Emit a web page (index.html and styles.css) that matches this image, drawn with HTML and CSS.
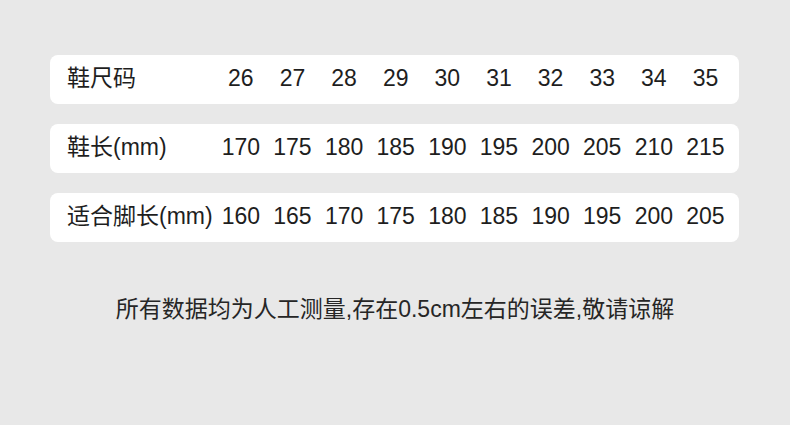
FILE: index.html
```html
<!DOCTYPE html>
<html lang="zh">
<head>
<meta charset="utf-8">
<title>尺码表</title>
<link rel="stylesheet" href="styles.css">
</head>
<body>
<div class="page">
  <div class="table">
    <div class="row">
      <div class="label">鞋尺码</div>
      <div class="cell">26</div><div class="cell">27</div><div class="cell">28</div><div class="cell">29</div><div class="cell">30</div>
      <div class="cell">31</div><div class="cell">32</div><div class="cell">33</div><div class="cell">34</div><div class="cell">35</div>
    </div>
    <div class="row">
      <div class="label">鞋长(mm)</div>
      <div class="cell">170</div><div class="cell">175</div><div class="cell">180</div><div class="cell">185</div><div class="cell">190</div>
      <div class="cell">195</div><div class="cell">200</div><div class="cell">205</div><div class="cell">210</div><div class="cell">215</div>
    </div>
    <div class="row">
      <div class="label">适合脚长(mm)</div>
      <div class="cell">160</div><div class="cell">165</div><div class="cell">170</div><div class="cell">175</div><div class="cell">180</div>
      <div class="cell">185</div><div class="cell">190</div><div class="cell">195</div><div class="cell">200</div><div class="cell">205</div>
    </div>
  </div>
  <p class="note">所有数据均为人工测量,存在0.5cm左右的误差,敬请谅解</p>
</div>
<div class="bottom"></div>
</body>
</html>
```

FILE: styles.css
```css
html, body {
  margin: 0;
  padding: 0;
  background: #ffffff;
}
body {
  font-family: "Liberation Sans", "Noto Sans CJK SC", sans-serif;
  color: #1e1e1e;
}
.page {
  height: 425px;
  background: #e8e8e8;
  padding-top: 55px;
  box-sizing: border-box;
  overflow: hidden;
}
.bottom {
  height: 21px;
  background: #ffffff;
}
.table {
  display: flex;
  flex-direction: column;
  gap: 20px;
  margin-left: 50px;
  width: 689px;
}
.row {
  display: grid;
  grid-template-columns: 148px repeat(10, 51.63px);
  align-items: baseline;
  height: 49px;
  padding: 8px 0 0 17px;
  box-sizing: border-box;
  background: #ffffff;
  border-radius: 8px;
  font-size: 23px;
  line-height: 30px;
}
.label {
  white-space: nowrap;
}
.cell {
  text-align: center;
  white-space: nowrap;
}
.note {
  margin: 52px 0 0 0;
  line-height: 30px;
  font-size: 23px;
  text-align: center;
  color: #262626;
}
```
